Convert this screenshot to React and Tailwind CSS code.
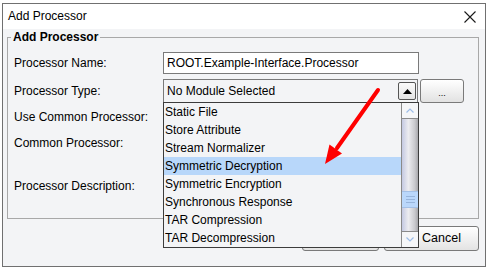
import React from "react";

const items = [
  "Static File",
  "Store Attribute",
  "Stream Normalizer",
  "Symmetric Decryption",
  "Symmetric Encryption",
  "Synchronous Response",
  "TAR Compression",
  "TAR Decompression",
];

export default function App() {
  return (
    <div className="relative w-[490px] h-[269px] bg-white overflow-hidden font-['Liberation_Sans',Arial,sans-serif] text-[12px] text-black">
      <div className="ml-[2px] mt-[3px] w-[484px] h-[264px] border border-[#707070] bg-[#f3f4f6] flex flex-col">
        {/* title bar */}
        <div className="h-[25px] bg-white flex items-center justify-between pl-[5px] pr-[9px]">
          <span className="text-[12px] leading-[15px]">Add Processor</span>
          <svg width="12" height="12" viewBox="0 0 12 12">
            <path d="M0.5 0.5 L11.5 11.5 M11.5 0.5 L0.5 11.5" stroke="#1a1a1a" strokeWidth="1.1" fill="none" />
          </svg>
        </div>
        {/* body */}
        <div className="flex flex-col px-[4px] pt-[1px]">
          <fieldset className="w-[472px] h-[189px] border border-[#a8a8a8]">
            <legend className="ml-[3px] px-[2px] font-bold text-[12px] leading-[15px]">Add Processor</legend>
            <div className="flex flex-col pl-[6px] pt-[7px]">
              <div className="flex items-center h-[22px]">
                <div className="w-[149px]">Processor Name:</div>
                <div className="w-[256px] h-[22px] border border-[#7a7a7a] bg-white pl-[3px] flex items-center">
                  ROOT.Example-Interface.Processor
                </div>
              </div>
              <div className="flex items-center h-[24px] mt-[5px]">
                <div className="w-[149px]">Processor Type:</div>
                <div className="w-[255px] h-[24px] border border-[#7a7a7a] bg-[#f3f4f6] pl-[3px] pr-[1px] flex items-center justify-between">
                  <span>No Module Selected</span>
                  <div className="w-[18px] h-[18px] border border-[#555] rounded-[2px] bg-[linear-gradient(to_bottom,#fbfbfb,#e4e4e4)] flex items-center justify-center">
                    <svg width="9" height="5" viewBox="0 0 9 5">
                      <path d="M0 5 L4.5 0 L9 5 Z" fill="#000" />
                    </svg>
                  </div>
                </div>
                <div className="ml-[2px] w-[44px] h-[24px] border border-[#7a7a7a] rounded-[3px] bg-[linear-gradient(to_bottom,#ffffff,#e2e2e2)] flex items-end justify-center pb-[4px] text-[9px] leading-[9px]">
                  ...
                </div>
              </div>
              <div className="flex items-center h-[28px]">
                <div className="w-[149px]">Use Common Processor:</div>
                <div className="w-[13px] h-[13px] border border-[#7a7a7a] bg-white" />
              </div>
              <div className="flex items-center h-[24px]">
                <div className="w-[149px]">Common Processor:</div>
                <div className="w-[230px] h-[22px] border border-[#7a7a7a] bg-white" />
              </div>
              <div className="flex items-center h-[52px] mt-[5px]">
                <div className="w-[149px]">Processor Description:</div>
                <div className="w-[256px] h-[52px] border border-[#7a7a7a] bg-white" />
              </div>
            </div>
          </fieldset>
          <div className="flex justify-end gap-[5px] pr-[2px] mt-[7px]">
            <div className="w-[77px] h-[25px] border border-[#7a7a7a] rounded-[3px] bg-[linear-gradient(to_bottom,#ffffff,#e3e3e3)] flex items-center justify-center">
              OK
            </div>
            <div className="w-[95px] h-[25px] border border-[#7a7a7a] rounded-[3px] bg-[linear-gradient(to_bottom,#ffffff,#e3e3e3)] flex items-center pl-[37px] text-[12.5px]">
              Cancel
            </div>
          </div>
        </div>
      </div>

      {/* dropdown popup list */}
      <div className="absolute left-[163px] top-[102px] w-[256px] h-[146px] border border-[#3c3c3c] bg-[#f3f4f6] flex">
        <div className="flex-1 flex flex-col">
          {items.map((t, i) => (
            <div
              key={t}
              className={
                i === 3
                  ? "h-[18px] leading-[18px] pl-[1px] bg-[#b8d7fa]"
                  : "h-[18px] leading-[18px] pl-[1px]"
              }
            >
              {t}
            </div>
          ))}
        </div>
        <div className="w-[17px] flex flex-col border-l border-[#8a8a8a]">
          <div className="h-[16px] border-b border-[#8a8a8a] bg-[#f5f6f8] flex items-center justify-center">
            <svg width="8" height="5" viewBox="0 0 8 5">
              <path d="M0.5 4.5 L4 1 L7.5 4.5" stroke="#9dbde8" strokeWidth="1.2" fill="none" />
            </svg>
          </div>
          <div className="flex-1 flex flex-col bg-[linear-gradient(to_right,#c4c9e2,#ececf0_40%,#c9c9cd_80%,#a8a8ac)]">
            <div className="h-[72px]" />
            <div className="h-[17px] bg-[#bad7fb] border-y border-[#a4c0e6] flex flex-col items-center justify-center gap-[2px]">
              <div className="w-[9px] h-px bg-[#98b5dc]" />
              <div className="w-[9px] h-px bg-[#98b5dc]" />
              <div className="w-[9px] h-px bg-[#98b5dc]" />
            </div>
          </div>
          <div className="h-[16px] border-t border-[#8a8a8a] bg-[#f5f6f8] flex items-center justify-center">
            <svg width="8" height="5" viewBox="0 0 8 5">
              <path d="M0.5 0.5 L4 4 L7.5 0.5" stroke="#9dbde8" strokeWidth="1.2" fill="none" />
            </svg>
          </div>
        </div>
      </div>

      {/* red annotation arrow */}
      <svg className="absolute left-0 top-0 pointer-events-none" width="490" height="269" viewBox="0 0 490 269">
        <line x1="378" y1="90" x2="337" y2="148" stroke="#ff0000" strokeWidth="4" strokeLinecap="round" />
        <path d="M325 164 L329.5 144.5 L342 153.5 Z" fill="#ff0000" />
      </svg>
    </div>
  );
}
